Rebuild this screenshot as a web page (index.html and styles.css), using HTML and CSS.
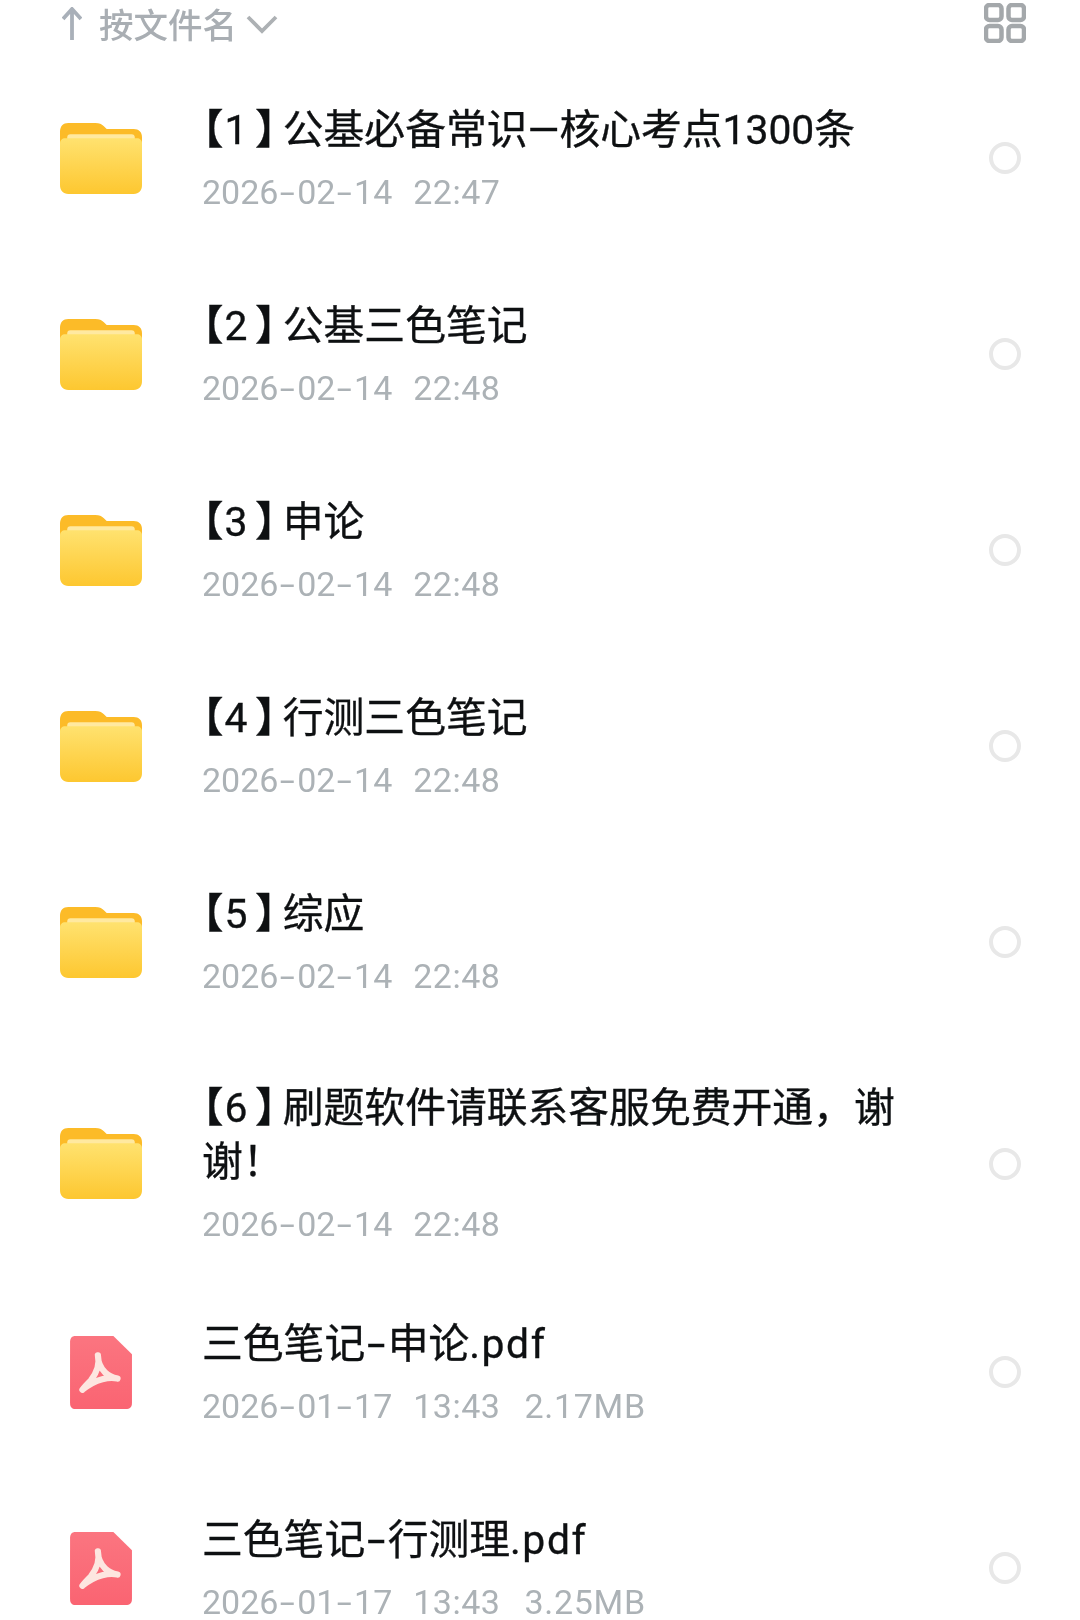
FILE: index.html
```html
<!DOCTYPE html>
<html lang="zh-CN">
<head>
  <meta charset="UTF-8">
  <title>文件列表</title>
  <link rel="stylesheet" href="styles.css">
</head>
<body>
  <svg class="defs" width="0" height="0">
    <defs>
      <linearGradient id="folderFront" x1="0" y1="0" x2="0" y2="1">
        <stop offset="0" stop-color="#ffe26f"/>
        <stop offset="1" stop-color="#fdc730"/>
      </linearGradient>
      <linearGradient id="pdfBody" x1="0" y1="0" x2="0" y2="1">
        <stop offset="0" stop-color="#fb7580"/>
        <stop offset="1" stop-color="#fa6472"/>
      </linearGradient>
      <symbol id="folder" viewBox="0 0 79 72" preserveAspectRatio="none">
        <path d="M0 10C0 4 3 1 8 1H34C38 1 40 2 42 4L45 7H71C76 7 79 10 79 15V30H0Z" fill="#fcbb28"/>
        <rect x="7" y="12" width="65" height="12" rx="3" fill="#ffe9a0"/>
        <path d="M0 21C0 18 2 16 5 16H74C77 16 79 18 79 21V62C79 68 76 71 71 71H8C3 71 0 68 0 62Z" fill="url(#folderFront)"/>
      </symbol>
      <symbol id="pdf" viewBox="0 0 62 74" preserveAspectRatio="none">
        <path d="M6 1H43L61 19V67C61 71 59 73 55 73H6C3 73 1 71 1 67V7C1 3 3 1 6 1Z" fill="url(#pdfBody)"/>
        <path d="M28 20C28 27 31 33 35 37C38 40 42 42 47 43M28 20C30 28 27 37 21 45C18 48 15 51 13 54M47 43C40 41 26 43 13 54" fill="none" stroke="#fde6e0" stroke-width="6" stroke-linecap="round" stroke-linejoin="round"/>
      </symbol>
    </defs>
  </svg>

  <div class="toolbar">
    <div class="sort">
      <svg class="sort-arrow" viewBox="0 0 20 34"><path d="M10 33V2M1 12L10 2L19 12" fill="none" stroke="#a9b0b9" stroke-width="3.8"/></svg>
      <span class="sort-label">按文件名</span>
      <svg class="sort-chevron" viewBox="0 0 32 19"><path d="M2 2L16 16L30 2" fill="none" stroke="#adb1b4" stroke-width="3.8"/></svg>
    </div>
    <svg class="grid-icon" viewBox="0 0 42 40">
      <rect x="2" y="2" width="15.500" height="15" rx="3.500"/>
      <rect x="24.500" y="2" width="15.500" height="15" rx="3.500"/>
      <rect x="2" y="23" width="15.500" height="15" rx="3.500"/>
      <rect x="24.500" y="23" width="15.500" height="15" rx="3.500"/>
    </svg>
  </div>

  <div class="file-list">
    <div class="row">
      <div class="icon"><svg class="folder"><use href="#folder"/></svg></div>
      <div class="info">
        <div class="name"><span class="br">【</span>1<span class="br br-end">】</span>公基必备常识—核心考点1300条</div>
        <div class="meta"><span>2026<span class="dash">-</span>02<span class="dash">-</span>14</span><span class="time">22:47</span></div>
      </div>
      <div class="radio"></div>
    </div>
    <div class="row">
      <div class="icon"><svg class="folder"><use href="#folder"/></svg></div>
      <div class="info">
        <div class="name"><span class="br">【</span>2<span class="br br-end">】</span>公基三色笔记</div>
        <div class="meta"><span>2026<span class="dash">-</span>02<span class="dash">-</span>14</span><span class="time">22:48</span></div>
      </div>
      <div class="radio"></div>
    </div>
    <div class="row">
      <div class="icon"><svg class="folder"><use href="#folder"/></svg></div>
      <div class="info">
        <div class="name"><span class="br">【</span>3<span class="br br-end">】</span>申论</div>
        <div class="meta"><span>2026<span class="dash">-</span>02<span class="dash">-</span>14</span><span class="time">22:48</span></div>
      </div>
      <div class="radio"></div>
    </div>
    <div class="row">
      <div class="icon"><svg class="folder"><use href="#folder"/></svg></div>
      <div class="info">
        <div class="name"><span class="br">【</span>4<span class="br br-end">】</span>行测三色笔记</div>
        <div class="meta"><span>2026<span class="dash">-</span>02<span class="dash">-</span>14</span><span class="time">22:48</span></div>
      </div>
      <div class="radio"></div>
    </div>
    <div class="row">
      <div class="icon"><svg class="folder"><use href="#folder"/></svg></div>
      <div class="info">
        <div class="name"><span class="br">【</span>5<span class="br br-end">】</span>综应</div>
        <div class="meta"><span>2026<span class="dash">-</span>02<span class="dash">-</span>14</span><span class="time">22:48</span></div>
      </div>
      <div class="radio"></div>
    </div>
    <div class="row row-wrapped">
      <div class="icon"><svg class="folder"><use href="#folder"/></svg></div>
      <div class="info">
        <div class="name"><span class="br">【</span>6<span class="br br-end">】</span>刷题软件请联系客服免费开通，谢谢！</div>
        <div class="meta"><span>2026<span class="dash">-</span>02<span class="dash">-</span>14</span><span class="time">22:48</span></div>
      </div>
      <div class="radio"></div>
    </div>
    <div class="row">
      <div class="icon icon-pdf"><svg class="pdf"><use href="#pdf"/></svg></div>
      <div class="info">
        <div class="name">三色笔记<span class="dash">-</span>申论<span class="ext">.pdf</span></div>
        <div class="meta"><span>2026<span class="dash">-</span>01<span class="dash">-</span>17</span><span class="time">13:43</span><span class="size">2.17MB</span></div>
      </div>
      <div class="radio"></div>
    </div>
    <div class="row">
      <div class="icon icon-pdf"><svg class="pdf"><use href="#pdf"/></svg></div>
      <div class="info">
        <div class="name">三色笔记<span class="dash">-</span>行测理<span class="ext">.pdf</span></div>
        <div class="meta"><span>2026<span class="dash">-</span>01<span class="dash">-</span>17</span><span class="time">13:43</span><span class="size">3.25MB</span></div>
      </div>
      <div class="radio"></div>
    </div>
  </div>
</body>
</html>
```

FILE: styles.css
```css
html, body {
  margin: 0;
  padding: 0;
  height: 1620px;
  overflow: hidden;
  background-color: #fff;
  font-family: "Roboto", "Noto Sans CJK SC", sans-serif;
}

body {
  filter: blur(0.5px);
}

.defs {
  display: block;
  height: 0;
}

.toolbar {
  height: 60px;
  padding: 3px 54px 0 62px;
  box-sizing: border-box;
  display: flex;
  justify-content: space-between;
  align-items: flex-start;
}

.sort {
  display: flex;
  align-items: center;
  height: 42px;
}

.sort-arrow {
  width: 20px;
  height: 34px;
  margin-right: 17px;
}

.sort-label {
  font-size: 34.5px;
  font-weight: 500;
  color: #a9aeb3;
  line-height: 42px;
  padding-top: 4px;
}

.sort-chevron {
  width: 32px;
  height: 19px;
  margin-left: 9px;
}

.grid-icon {
  width: 42px;
  height: 40px;
  fill: none;
  stroke: #a4a8ab;
  stroke-width: 4.5;
}

.row {
  display: flex;
  align-items: center;
  padding: 41px 0 41px 60px;
  height: 196px;
  box-sizing: border-box;
}

.row-wrapped {
  height: 234px;
  padding-bottom: 28px;
}

.icon {
  width: 82px;
  margin-right: 60px;
  flex-shrink: 0;
  display: flex;
}

.icon-pdf {
  padding-left: 9px;
  width: 73px;
}

.folder {
  width: 82px;
  height: 73px;
}

.pdf {
  width: 64px;
  height: 75px;
}

.info {
  width: 710px;
  padding-top: 1px;
  flex-shrink: 0;
}

.name {
  font-size: 40.8px;
  line-height: 54px;
  color: #0e1012;
  -webkit-text-stroke: 0.35px #0e1012;
}

.br {
  font-feature-settings: "palt";
  font-weight: 700;
  margin-right: 2px;
}

.br-end {
  margin: 0 6px 0 9px;
}

.ext {
  letter-spacing: 1.6px;
}

.dash {
  display: inline-block;
  width: 0.55em;
  text-align: center;
  transform: scaleX(1.6);
}

.meta {
  display: flex;
  gap: 21px;
  margin-top: 12px;
  font-size: 34px;
  line-height: 46px;
  color: #acb2b6;
}

.time {
  letter-spacing: 0.5px;
}

.size {
  letter-spacing: 0.7px;
  margin-left: 3px;
}

.radio {
  width: 32px;
  height: 32px;
  box-sizing: border-box;
  border: 4px solid #e8e8e8;
  border-radius: 50%;
  margin-left: 77px;
  flex-shrink: 0;
}
```
